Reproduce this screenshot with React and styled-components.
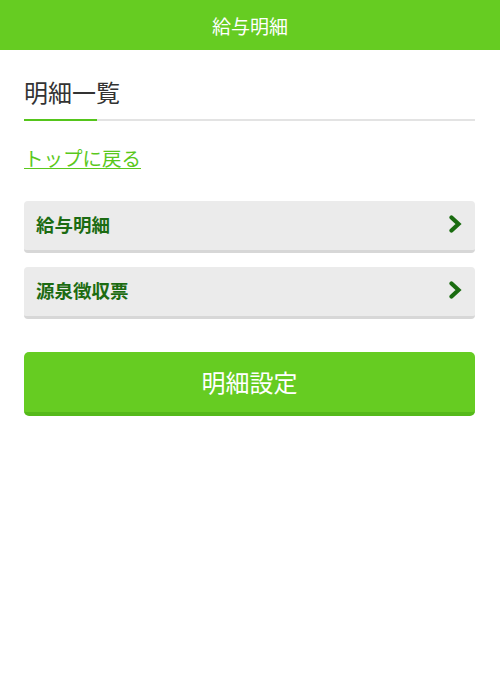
import React from "react";
import { styled, createGlobalStyle } from "styled-components";

const GlobalStyle = createGlobalStyle`
  html, body {
    margin: 0;
    padding: 0;
    background: #ffffff;
    font-family: "Noto Sans CJK JP", "Noto Sans", sans-serif;
  }
`;

const StyledPage = styled.div`
  width: 500px;
  min-height: 683px;
  background: #ffffff;
`;

const StyledHeader = styled.header`
  height: 50px;
  background-color: #66cc22;
  color: #ffffff;
  font-size: 19px;
  font-weight: 400;
  display: flex;
  align-items: center;
  justify-content: center;
`;

const StyledMain = styled.main`
  padding: 24px 25px 0 24px;
  display: flex;
  flex-direction: column;
`;

const StyledTitle = styled.h1`
  margin: 0;
  font-size: 24px;
  font-weight: 400;
  line-height: 36px;
  color: #333333;
  padding-bottom: 9px;
`;

const StyledRule = styled.div`
  display: flex;
  height: 2px;
`;

const StyledRulePart = styled.div`
  flex: ${(p) => (p.$active ? "0 0 73px" : "1")};
  background-color: ${(p) => (p.$active ? "#55c51b" : "#e3e3e3")};
`;

const StyledBack = styled.a`
  align-self: flex-start;
  margin-top: 22px;
  font-size: 19.5px;
  line-height: 30px;
  color: #5ac81c;
  text-decoration: underline;
  text-underline-offset: 2px;
  text-decoration-thickness: 1px;
  cursor: pointer;
`;

const StyledList = styled.div`
  margin-top: 28px;
  display: flex;
  flex-direction: column;
  row-gap: 14px;
`;

const StyledItem = styled.button`
  border: 0;
  outline: 0;
  height: 52px;
  box-sizing: border-box;
  background-color: #ebebeb;
  border-bottom: 3px solid #d7d7d7;
  border-radius: 4px;
  padding: 0 13px 3px 12px;
  display: flex;
  align-items: center;
  justify-content: space-between;
  font-family: inherit;
  font-size: 18.5px;
  font-weight: 700;
  color: #1c6b12;
  cursor: pointer;
`;

const StyledButton = styled.button`
  margin-top: 33px;
  border: 0;
  outline: 0;
  height: 64px;
  box-sizing: border-box;
  background-color: #66cc22;
  border-bottom: 4px solid #55b91a;
  border-radius: 5px;
  padding-bottom: 3px;
  color: #ffffff;
  font-family: inherit;
  font-size: 24px;
  font-weight: 400;
  cursor: pointer;
`;

function Chevron() {
  return (
    <svg width="13" height="18" viewBox="0 0 13 18">
      <polyline
        points="2.5,2.5 9.5,9 2.5,15.5"
        fill="none"
        stroke="#1a6c10"
        strokeWidth="4.2"
        strokeLinecap="round"
        strokeLinejoin="miter"
      />
    </svg>
  );
}

function App() {
  return (
    <StyledPage>
      <GlobalStyle />
      <StyledHeader>給与明細</StyledHeader>
      <StyledMain>
        <StyledTitle>明細一覧</StyledTitle>
        <StyledRule>
          <StyledRulePart $active />
          <StyledRulePart />
        </StyledRule>
        <StyledBack>トップに戻る</StyledBack>
        <StyledList>
          {["給与明細", "源泉徴収票"].map((label) => (
            <StyledItem key={label}>
              <span>{label}</span>
              <Chevron />
            </StyledItem>
          ))}
        </StyledList>
        <StyledButton>明細設定</StyledButton>
      </StyledMain>
    </StyledPage>
  );
}

export default App;
